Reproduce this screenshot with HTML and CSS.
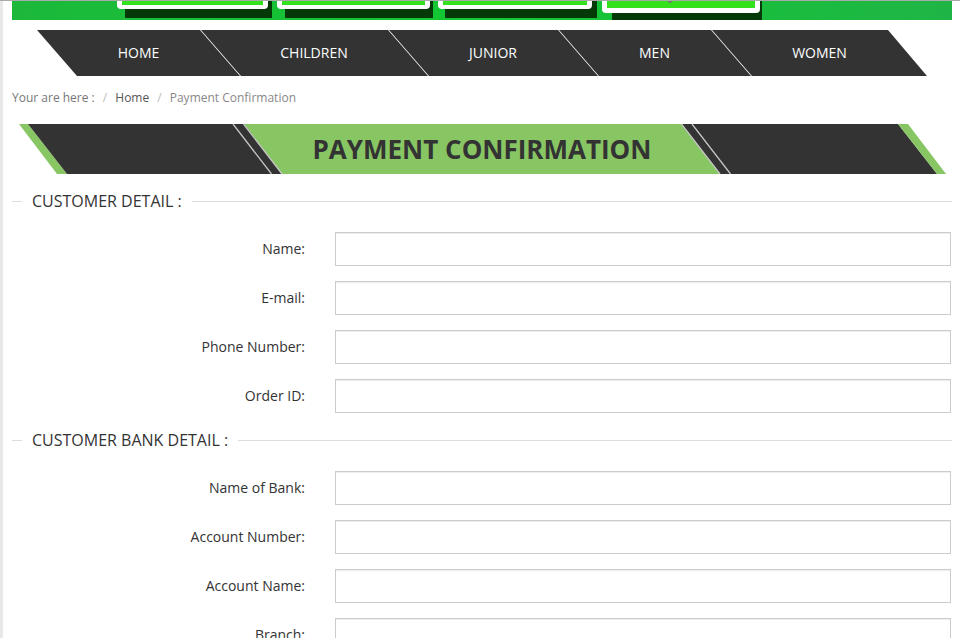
FILE: index.html
```html
<!DOCTYPE html>
<html lang="en">
<head>
    <meta charset="UTF-8">
    <meta name="viewport" content="width=device-width, initial-scale=1.0">
    <title>Payment Confirmation</title>
    <link rel="stylesheet" href="styles.css">
</head>
<body>
    <div class="page">
        <div class="container">
            <div class="banner">
                <svg width="940" height="19" viewBox="12 1 940 19" preserveAspectRatio="none">
                    <defs>
                        <linearGradient id="bannerBg" x1="0" y1="0" x2="1" y2="0">
                            <stop offset="0" stop-color="#1cb83c"/>
                            <stop offset="0.5" stop-color="#12c832"/>
                            <stop offset="1" stop-color="#1fb546"/>
                        </linearGradient>
                    </defs>
                    <rect x="12" y="1" width="940" height="19" fill="url(#bannerBg)"/>
                    <!-- buttons, only their lower edge shows -->
                    <rect x="125" y="-10" width="147" height="28" fill="#053a08"/>
                    <rect x="117" y="-20" width="151" height="29" rx="4" fill="#fff"/>
                    <rect x="122" y="-20" width="141" height="25" fill="#33e21d"/>

                    <rect x="285" y="-10" width="148" height="28" fill="#053a08"/>
                    <rect x="277" y="-20" width="153" height="29" rx="4" fill="#fff"/>
                    <rect x="282" y="-20" width="143" height="25" fill="#33e21d"/>

                    <rect x="445" y="-10" width="152" height="28" fill="#053a08"/>
                    <rect x="438" y="-20" width="154" height="29" rx="4" fill="#fff"/>
                    <rect x="443" y="-20" width="144" height="25" fill="#33e21d"/>

                    <rect x="612" y="-10" width="150" height="30" fill="#053a08"/>
                    <rect x="602" y="-20" width="158" height="33" rx="4" fill="#fff"/>
                    <rect x="607" y="-20" width="148" height="28" fill="#33e21d"/>
                    <circle cx="670" cy="1" r="2" fill="#777"/>
                </svg>
            </div>

            <ul class="nav">
                <li class="nav-home"><a href="#">HOME</a></li>
                <li class="nav-children"><a href="#">CHILDREN</a></li>
                <li class="nav-junior"><a href="#">JUNIOR</a></li>
                <li class="nav-men"><a href="#">MEN</a></li>
                <li class="nav-women"><a href="#">WOMEN</a></li>
            </ul>

            <ul class="breadcrumb">
                <li>Your are here :</li>
                <li><a href="#">Home</a></li>
                <li class="active">Payment Confirmation</li>
            </ul>

            <div class="title-bar">
                <svg class="title-bg" width="940" height="50" viewBox="12 0 940 50">
                    <polygon points="19,0 28,0 67,50 57,50" fill="#88c664"/>
                    <polygon points="28,0 898,0 937,50 67,50" fill="#333"/>
                    <polygon points="898,0 908,0 946,50 937,50" fill="#88c664"/>
                    <polygon points="244,0 681,0 720,50 282,50" fill="#88c664"/>
                    <line x1="233" y1="0" x2="271.5" y2="50" stroke="#c8c8c8" stroke-width="1.3"/>
                    <line x1="243.5" y1="0" x2="282" y2="50" stroke="#c8c8c8" stroke-width="1.3"/>
                    <line x1="681.5" y1="0" x2="720" y2="50" stroke="#c8c8c8" stroke-width="1.3"/>
                    <line x1="692" y1="0" x2="730.5" y2="50" stroke="#c8c8c8" stroke-width="1.3"/>
                </svg>
                <h1>PAYMENT CONFIRMATION</h1>
            </div>

            <form class="confirm-form">
                <div class="legend">CUSTOMER DETAIL :</div>
                <div class="form-row">
                    <label for="name">Name:</label>
                    <input type="text" id="name">
                </div>
                <div class="form-row">
                    <label for="email">E-mail:</label>
                    <input type="text" id="email">
                </div>
                <div class="form-row">
                    <label for="phone">Phone Number:</label>
                    <input type="text" id="phone">
                </div>
                <div class="form-row">
                    <label for="order">Order ID:</label>
                    <input type="text" id="order">
                </div>

                <div class="legend">CUSTOMER BANK DETAIL :</div>
                <div class="form-row">
                    <label for="bank">Name of Bank:</label>
                    <input type="text" id="bank">
                </div>
                <div class="form-row">
                    <label for="accnum">Account Number:</label>
                    <input type="text" id="accnum">
                </div>
                <div class="form-row">
                    <label for="accname">Account Name:</label>
                    <input type="text" id="accname">
                </div>
                <div class="form-row">
                    <label for="branch">Branch:</label>
                    <input type="text" id="branch">
                </div>
            </form>
        </div>
    </div>
</body>
</html>
```

FILE: styles.css
```css
body {
    margin: 0;
    border-top: 1px solid #a9a9a9;
    background-color: #e8e8e8;
    font-family: "Open Sans", "Liberation Sans", sans-serif;
    color: #333;
}
.page {
    margin-left: 3px;
    background-color: #fff;
    min-height: 700px;
}
.container {
    width: 940px;
    margin-left: 9px;
}
.banner {
    height: 19px;
}
.banner svg {
    display: block;
}

/* main menu */
.nav {
    list-style: none;
    margin: 10px 0 0 25px;
    padding: 0 0 0 20px;
    width: 870px;
    height: 46px;
    display: flex;
    background-color: #333;
    clip-path: polygon(0 0, 851px 0, 100% 100%, 40px 100%);
}
.nav li {
    position: relative;
    display: flex;
    align-items: center;
    justify-content: center;
    padding-bottom: 2px;
    box-sizing: border-box;
}
.nav li + li::before {
    content: "";
    position: absolute;
    left: 0;
    top: 0;
    bottom: 0;
    width: 1px;
    background-color: #fff;
    transform: skewX(41deg);
}
.nav a {
    color: #fff;
    text-decoration: none;
    font-size: 14px;
}
.nav-home { width: 163px; }
.nav-children { width: 188px; }
.nav-junior { width: 170px; }
.nav-men { width: 153px; }
.nav-women { width: 177px; }

.breadcrumb {
    list-style: none;
    margin: 13px 0 0;
    padding: 0;
    display: flex;
    font-size: 12px;
    line-height: 18px;
    color: #777;
}
.breadcrumb li + li::before {
    content: "/\00a0";
    padding: 0 5px 0 8px;
    color: #bbb;
}
.breadcrumb a {
    color: #555;
    text-decoration: none;
}
.breadcrumb .active {
    color: #888;
}

.title-bar {
    position: relative;
    height: 50px;
    margin-top: 17px;
}
.title-bg {
    position: absolute;
    left: 0;
    top: 0;
}
.title-bar h1 {
    position: relative;
    margin: 0;
    line-height: 50px;
    font-size: 26px;
    font-weight: bold;
    text-align: center;
    color: #333;
}

.legend {
    display: flex;
    align-items: center;
    margin: 17px 0 21px;
    font-size: 16px;
    line-height: 20px;
    color: #333;
}
.legend::before,
.legend::after {
    content: "";
    height: 1px;
    background-color: #ddd;
}
.legend::before {
    width: 10px;
    margin-right: 10px;
}
.legend::after {
    flex: 1;
    margin-left: 10px;
}

.form-row {
    display: flex;
    align-items: center;
    margin-bottom: 15px;
}
.form-row label {
    width: 293px;
    margin-right: 30px;
    padding-bottom: 2px;
    text-align: right;
    font-size: 14px;
    color: #333;
}
.form-row input {
    width: 616px;
    height: 34px;
    box-sizing: border-box;
    border: 1px solid #ccc;
    box-shadow: inset 0 1px 1px rgba(0,0,0,0.075);
    padding: 6px 12px;
    font-size: 14px;
}
```
